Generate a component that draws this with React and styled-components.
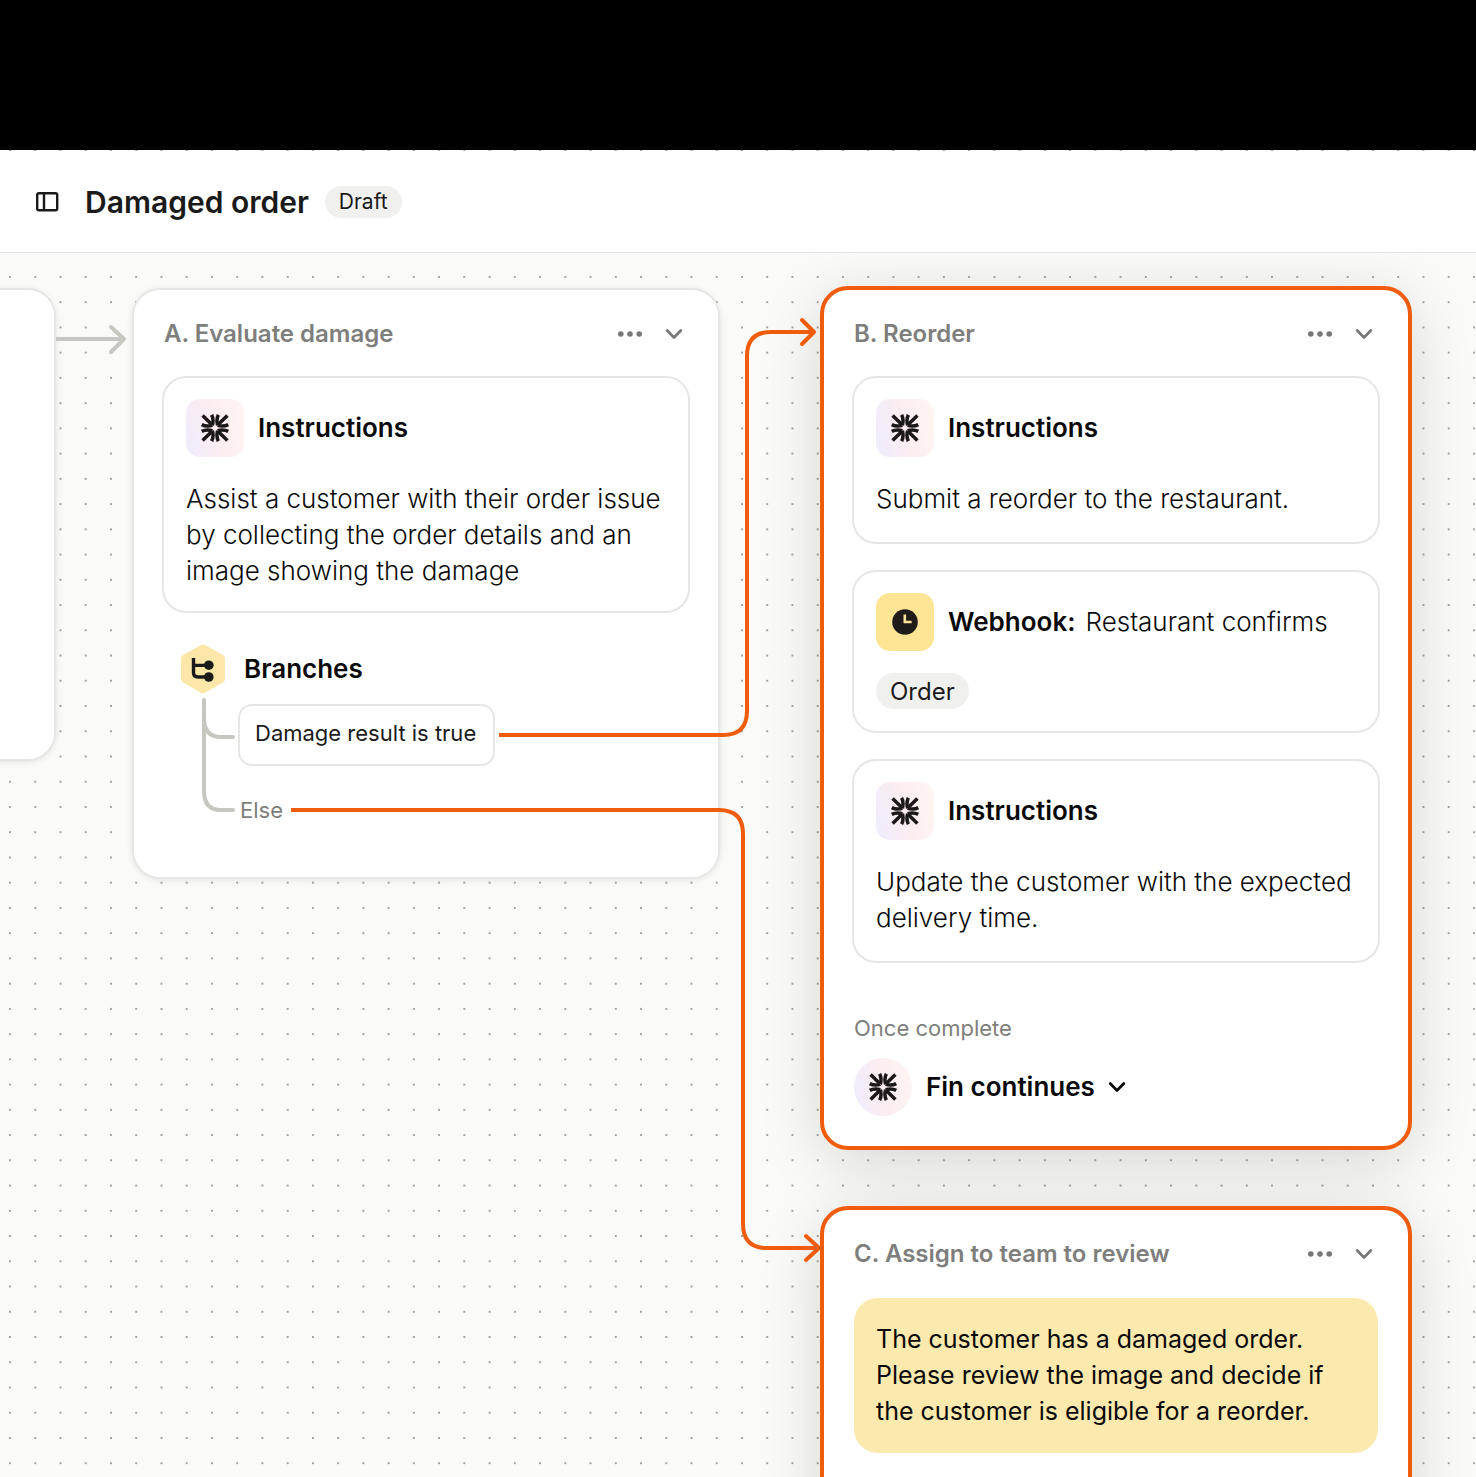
import React from "react";
import styled, { createGlobalStyle } from "styled-components";

const ink = "#1a1a1a";
const strong = "#0a0a0a";
const muted = "#7e7e7c";
const orange = "#ee5c0c";
const line = "#e6e6e4";
const sans = `Inter, "Liberation Sans", sans-serif`;

const GlobalStyle = createGlobalStyle`
  * { box-sizing: border-box; }
  body { margin: 0; background: #000; font-family: ${sans}; color: ${ink}; }
  h1, h2, h3, p { margin: 0; }
  button { font: inherit; color: inherit; background: none; border: 0; padding: 0; }
`;

const Page = styled.div`
  display: flex;
  flex-direction: column;
  height: 100vh;
  padding-top: 150px;
`;

const Workspace = styled.main`
  position: relative;
  flex: 1;
  display: flex;
  flex-direction: column;
  padding-top: 1px;
  background: #fafaf8;
  overflow: hidden;
`;

const Dots = styled.svg`
  position: absolute;
  inset: 0;
  width: 100%;
  height: 100%;
`;

const Header = styled.header`
  position: relative;
  z-index: 2;
  display: flex;
  align-items: center;
  height: 102px;
  padding: 0 35px;
  background: #fff;
  border-bottom: 1px solid #e2e2e0;
`;

const IconButton = styled.button`
  display: grid;
  place-items: center;
  width: 24px;
  height: 24px;
  color: ${(p) => p.$color || ink};
`;

const Title = styled.h1`
  margin-left: 26px;
  font-size: 30px;
  line-height: 40px;
  font-weight: 600;
`;

const Pill = styled.span`
  display: inline-flex;
  align-items: center;
  height: ${(p) => (p.$large ? 36 : 32)}px;
  padding: 0 14px;
  border-radius: 18px;
  background: #f0f0ef;
  font-size: ${(p) => (p.$large ? 24 : 21)}px;
`;

const Status = styled.div`
  display: flex;
  margin-left: 16px;
`;

const Canvas = styled.div`
  position: relative;
  flex: 1;
  isolation: isolate;
`;

const Node = styled.section`
  position: absolute;
  left: ${(p) => p.$x}px;
  top: ${(p) => p.$y}px;
  width: ${(p) => p.$w || 592}px;
  min-height: ${(p) => p.$h || 0}px;
  padding: ${(p) => (p.$active ? "26px 28px 30px" : "26px 28px 48px")};
  border: ${(p) => (p.$active ? `4px solid ${orange}` : `2px solid ${line}`)};
  border-radius: 28px;
  background: #fff;

  &::before {
    content: "";
    position: absolute;
    z-index: -1;
    inset: 0;
    border-radius: 28px;
    box-shadow: ${(p) => (p.$active ? "0 12px 64px rgba(20, 20, 10, 0.17)" : "0 1px 6px 2px rgba(20, 20, 10, 0.1)")};
  }
`;

const NodeHead = styled.div`
  display: flex;
  align-items: center;
  height: 36px;
  padding: 0 4px 0 2px;
  color: ${muted};
`;

const NodeTitle = styled.h2`
  flex: 1;
  font-size: 24px;
  line-height: 36px;
  font-weight: 600;
`;

const Actions = styled.div`
  display: flex;
  gap: 20px;
`;

const Stack = styled.div`
  display: flex;
  flex-direction: column;
  gap: 26px;
  margin-top: 24px;
`;

const Card = styled.article`
  padding: 21px 18px ${(p) => (p.$roomy ? 25 : 22)}px 22px;
  border: 2px solid ${line};
  border-radius: 24px;
`;

const CardHead = styled.div`
  display: flex;
  align-items: center;
  gap: 14px;
`;

const Tile = styled.span`
  display: grid;
  place-items: center;
  flex: none;
  width: 58px;
  height: 58px;
  border-radius: ${(p) => (p.$round ? "50%" : "14px")};
  background: ${(p) => (p.$warm ? "#fee595" : "linear-gradient(75deg, #eeecfd 0%, #fcedf1 50%, #fff6f2 100%)")};
`;

const Heading = styled.h3`
  font-size: 26px;
  line-height: 36px;
  font-weight: 600;
  color: ${strong};
`;

const HeadLine = styled.div`
  display: flex;
  align-items: center;
  gap: 10px;
`;

const Detail = styled.p`
  font-size: 26px;
  line-height: 36px;
  font-weight: 300;
  color: ${strong};
`;

const Body = styled(Detail)`
  margin-top: 24px;
`;

const Tags = styled.div`
  display: flex;
  margin-top: 22px;
`;

const BranchHead = styled.div`
  display: flex;
  align-items: center;
  gap: 18px;
  margin-top: 31px;
  padding-left: 18px;
`;

const BranchBody = styled.div`
  display: flex;
  align-items: flex-start;
  padding: 4px 0 0 39px;
`;

const BranchList = styled.ul`
  display: flex;
  flex-direction: column;
  gap: 26px;
  margin: 6px 0 0;
  padding: 0;
  list-style: none;
  font-size: 22px;
  line-height: 36px;
`;

const Condition = styled.li`
  height: 62px;
  padding: 9px 17px 9px 15px;
  border: 2px solid ${line};
  border-radius: 14px;
`;

const Otherwise = styled.li`
  padding-left: 2px;
  color: ${muted};
`;

const Caption = styled.p`
  && {
    margin: 47px 0 12px 2px;
  }
  font-size: 22px;
  line-height: 36px;
  color: ${muted};
`;

const NextStep = styled.button`
  display: flex;
  align-items: center;
  gap: 14px;
  padding: 0 2px;
`;

const NextLabel = styled.span`
  display: flex;
  align-items: center;
  gap: 12px;
  font-size: 26px;
  line-height: 36px;
  font-weight: 600;
  color: ${strong};
`;

const Note = styled.p`
  margin: 26px 2px 0;
  padding: 23px 22px 24px;
  border-radius: 24px;
  background: #fce9ae;
  font-size: 25px;
  line-height: 36px;
  color: ${strong};
`;

const Connectors = styled.svg`
  position: absolute;
  left: 0;
  top: 0;
  width: 840px;
  height: 1100px;
  overflow: visible;
  pointer-events: none;
`;

function FinMark() {
  const quarter = (
    <g>
      <path d="M1.6 1.6 L11 10.8" />
      <path d="M10.6 0.8 Q13 5 11.4 11.4" />
      <path d="M0.8 10.6 Q5 13 11.4 11.4" />
    </g>
  );
  return (
    <svg width="28" height="28" viewBox="0 0 28 28" fill="none" stroke="#1c1719" strokeWidth="3.5" aria-hidden="true">
      {quarter}
      <g transform="translate(28 0) scale(-1 1)">{quarter}</g>
      <g transform="translate(0 28) scale(1 -1)">{quarter}</g>
      <g transform="translate(28 28) scale(-1 -1)">{quarter}</g>
    </svg>
  );
}

function Chevron() {
  return (
    <svg width="20" height="20" viewBox="0 0 20 20" fill="none" stroke="currentColor" strokeWidth="2.8" strokeLinecap="round" strokeLinejoin="round" aria-hidden="true">
      <path d="M3.2 6.6 L10 13.4 L16.8 6.6" />
    </svg>
  );
}

function More() {
  return (
    <svg width="24" height="24" viewBox="0 0 24 24" fill="currentColor" overflow="visible" aria-hidden="true">
      <circle cx="2.8" cy="12" r="2.8" />
      <circle cx="12" cy="12" r="2.8" />
      <circle cx="21.2" cy="12" r="2.8" />
    </svg>
  );
}

function NodeHeader({ title }) {
  return (
    <NodeHead>
      <NodeTitle>{title}</NodeTitle>
      <Actions>
        <IconButton type="button" $color="#787876" aria-label="More options"><More /></IconButton>
        <IconButton type="button" $color="#787876" aria-label="Collapse"><Chevron /></IconButton>
      </Actions>
    </NodeHead>
  );
}

function Instructions({ roomy, children }) {
  return (
    <Card $roomy={roomy}>
      <CardHead>
        <Tile><FinMark /></Tile>
        <Heading>Instructions</Heading>
      </CardHead>
      <Body>{children}</Body>
    </Card>
  );
}

export default function App() {
  return (
    <Page>
      <GlobalStyle />
      <Workspace>
        <Header>
          <IconButton type="button" aria-label="Toggle sidebar">
            <svg width="24" height="24" viewBox="0 0 24 24" fill="none" stroke="currentColor" strokeWidth="2.4" aria-hidden="true">
              <rect x="2.2" y="3.2" width="20" height="17" rx="1.8" />
              <path d="M9 3.2 V20.2" />
            </svg>
          </IconButton>
          <Title>Damaged order</Title>
          <Status><Pill>Draft</Pill></Status>
        </Header>
        <Dots aria-hidden="true">
          <defs>
            <pattern id="dots" x="-2.6" y="-11.9" width="25.24" height="25.24" patternUnits="userSpaceOnUse">
              <circle cx="12.62" cy="12.62" r="1" fill="#868684" />
            </pattern>
          </defs>
          <rect width="100%" height="100%" fill="url(#dots)" />
        </Dots>
        <Canvas>
          <Node $x={-540} $y={35} $w={596} $h={473} aria-label="Previous step" />
          <Node $x={132} $y={35} $w={588} $h={591}>
            <NodeHeader title="A. Evaluate damage" />
            <Stack>
              <Instructions>
                Assist a customer with their order issue by collecting the order details and an image showing the damage
              </Instructions>
            </Stack>
            <BranchHead>
              <svg width="46" height="50" viewBox="0 0 46 50" aria-hidden="true">
                <path d="M21 1 Q23 0 25 1 L43 11 Q45 12.2 45 14.5 V35 Q45 37.2 43 38.4 L25 48.8 Q23 50 21 48.8 L3 38.4 Q1 37.2 1 35 V14.5 Q1 12.2 3 11 Z" fill="#fce7a8" />
                <path d="M13.5 14 V28.5 Q13.5 33 18 33 H28 M13.5 21.4 H28" fill="none" stroke="#1a1a1a" strokeWidth="3.4" />
                <circle cx="28.8" cy="21.2" r="4.8" fill="#1a1a1a" />
                <circle cx="28.8" cy="33" r="4.8" fill="#1a1a1a" />
              </svg>
              <Heading>Branches</Heading>
            </BranchHead>
            <BranchBody>
              <svg width="37" height="118" viewBox="0 0 37 118" fill="none" stroke="#c6c7c0" strokeWidth="4" strokeLinecap="round" aria-hidden="true">
                <path d="M3 2 V93 Q3 112 20 112 H32" />
                <path d="M3 20 Q3 39 20 39 H32" />
              </svg>
              <BranchList>
                <Condition>Damage result is true</Condition>
                <Otherwise>Else</Otherwise>
              </BranchList>
            </BranchBody>
          </Node>
          <Node $x={820} $y={33} $active>
            <NodeHeader title="B. Reorder" />
            <Stack>
              <Instructions roomy>Submit a reorder to the restaurant.</Instructions>
              <Card>
                <CardHead>
                  <Tile $warm>
                    <svg width="28" height="28" viewBox="0 0 28 28" aria-hidden="true">
                      <circle cx="14" cy="14" r="12.8" fill="#1e1b18" />
                      <path d="M13.8 6.6 V14 H20.6" fill="none" stroke="#fee595" strokeWidth="2.6" />
                    </svg>
                  </Tile>
                  <HeadLine>
                    <Heading>Webhook:</Heading>
                    <Detail>Restaurant confirms</Detail>
                  </HeadLine>
                </CardHead>
                <Tags><Pill $large>Order</Pill></Tags>
              </Card>
              <Instructions roomy>Update the customer with the expected delivery time.</Instructions>
            </Stack>
            <Caption>Once complete</Caption>
            <NextStep type="button">
              <Tile $round><FinMark /></Tile>
              <NextLabel>Fin continues <Chevron /></NextLabel>
            </NextStep>
          </Node>
          <Node $x={820} $y={953} $h={420} $active>
            <NodeHeader title="C. Assign to team to review" />
            <Note>The customer has a damaged order. Please review the image and decide if the customer is eligible for a reorder.</Note>
          </Node>
          <Connectors viewBox="0 0 840 1100" fill="none" stroke={orange} strokeWidth="4" strokeLinejoin="round" aria-hidden="true">
            <g stroke="#c6c7c0" strokeLinecap="round">
              <path d="M56 86 H124" strokeLinecap="butt" />
              <path d="M111 74 L124 86 L111 99" />
            </g>
            <path d="M499 482 H723 Q747 482 747 458 V103 Q747 79 771 79 H814" />
            <path d="M802 67 L814 79 L802 91" strokeLinecap="round" />
            <path d="M291 557 H719 Q743 557 743 581 V971 Q743 995 767 995 H819" />
            <path d="M806 983 L819 995 L806 1007" strokeLinecap="round" />
          </Connectors>
        </Canvas>
      </Workspace>
    </Page>
  );
}
